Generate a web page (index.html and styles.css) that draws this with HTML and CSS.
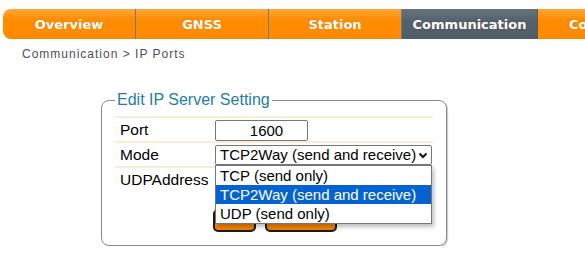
FILE: index.html
```html
<!DOCTYPE html>
<html lang="en">
<head>
<meta charset="utf-8">
<title>IP Ports</title>
<link rel="stylesheet" href="styles.css">
</head>
<body>
	<nav class="tabs">
		<a class="tab first">Overview</a>
		<a class="tab">GNSS</a>
		<a class="tab">Station</a>
		<a class="tab active">Communication</a>
		<a class="tab last">Configuration</a>
	</nav>
	<div class="crumb">Communication &gt; IP Ports</div>

	<fieldset class="box">
		<legend>Edit IP Server Setting</legend>
		<div class="row line">
			<span class="label">Port</span>
			<span class="field"><span class="text-input">1600</span></span>
		</div>
		<div class="row line">
			<span class="label">Mode</span>
			<span class="field select-wrap">
				<span class="select">TCP2Way (send and receive)
					<svg class="chevron" width="10" height="7" viewBox="0 0 10 7"><polyline points="1.5,1.5 5,5 8.5,1.5" fill="none" stroke="#111" stroke-width="2"/></svg>
				</span>
				<span class="options">
					<span class="option">TCP (send only)</span>
					<span class="option selected">TCP2Way (send and receive)</span>
					<span class="option">UDP (send only)</span>
				</span>
			</span>
		</div>
		<div class="row line">
			<span class="label">UDPAddress</span>
			<span class="field"></span>
		</div>
		<div class="row buttons">
			<span class="label"></span>
			<span class="field">
				<span class="btn small"></span>
				<span class="btn wide"></span>
			</span>
		</div>
	</fieldset>
</body>
</html>
```

FILE: styles.css
```css
body { margin: 0; overflow: hidden; font-family: "Liberation Sans", Arial, sans-serif; color: #000; }

.tabs { display: flex; margin: 9px 0 0 3px; height: 30px; width: 760px; }

.tab { flex: 0 0 132px; display: flex; align-items: center; justify-content: center; font: bold 13px "DejaVu Sans", Verdana, sans-serif; color: #fff; background: linear-gradient(#ffa63c, #ff8c00 35%, #ff8c00 85%, #f98800); border-right: 1px solid #7a7a7a; text-shadow: 0 0 1px rgba(120, 60, 0, 0.4); }

.tab.first { border-radius: 8px 0 0 8px; }

.tab.active { flex-basis: 135px; background: linear-gradient(#66727e, #55616d 40%, #4f5b67); border-right-color: #4f5b67; }

.tab.last { flex-basis: 162px; }

.crumb { margin: 8px 0 0 22px; font-size: 12px; line-height: 14px; letter-spacing: 1px; color: #4e4e5c; }

.box { box-sizing: border-box; width: 346px; height: 155px; margin: 30px 0 0 101px; padding: 0 13px; border: 1px solid #8a8a8a; border-radius: 8px; box-shadow: 1px 1px 1px #c8c8c8; }

.box legend { padding: 0 2px; font-size: 16px; color: #1f7ea1; }

.row { display: flex; align-items: center; width: 318px; height: 25px; font-size: 15.5px; }

.row.line { border-top: 2px solid #fdebd6; box-sizing: border-box; padding-top: 1px; }

.row.line:first-of-type { margin-top: 7px; }

.label { width: 100px; padding-left: 5px; box-sizing: border-box; }

.field { display: flex; gap: 9px; position: relative; font-size: 15px; }

.text-input { box-sizing: border-box; width: 93px; height: 21px; padding-left: 10px; border: 1px solid #767676; border-radius: 2px; text-align: center; line-height: 19px; }

.select { box-sizing: border-box; display: flex; align-items: center; justify-content: space-between; width: 217px; height: 20px; padding: 0 3px 0 4px; border: 1px solid #767676; border-radius: 2px; line-height: 18px; white-space: nowrap; }

.chevron { flex: none; }

.options { position: absolute; top: 20px; left: 0; z-index: 2; box-sizing: border-box; width: 217px; display: flex; flex-direction: column; background: #fff; border: 1px solid #767676; box-shadow: 2px 3px 4px rgba(0, 0, 0, 0.25); }

.option { height: 19px; line-height: 19px; padding-left: 4px; white-space: nowrap; }

.option.selected { background: #0563d0; color: #fff; }

.row.buttons { margin-top: 17px; height: 24px; }

.btn { box-sizing: border-box; height: 23px; border: 2px solid #1a1a1a; border-radius: 5px; background: linear-gradient(#ffb24f, #ff8c00 50%, #f08000); }

.btn.small { width: 43px; margin-left: -2px; }

.btn.wide { width: 72px; }
```
